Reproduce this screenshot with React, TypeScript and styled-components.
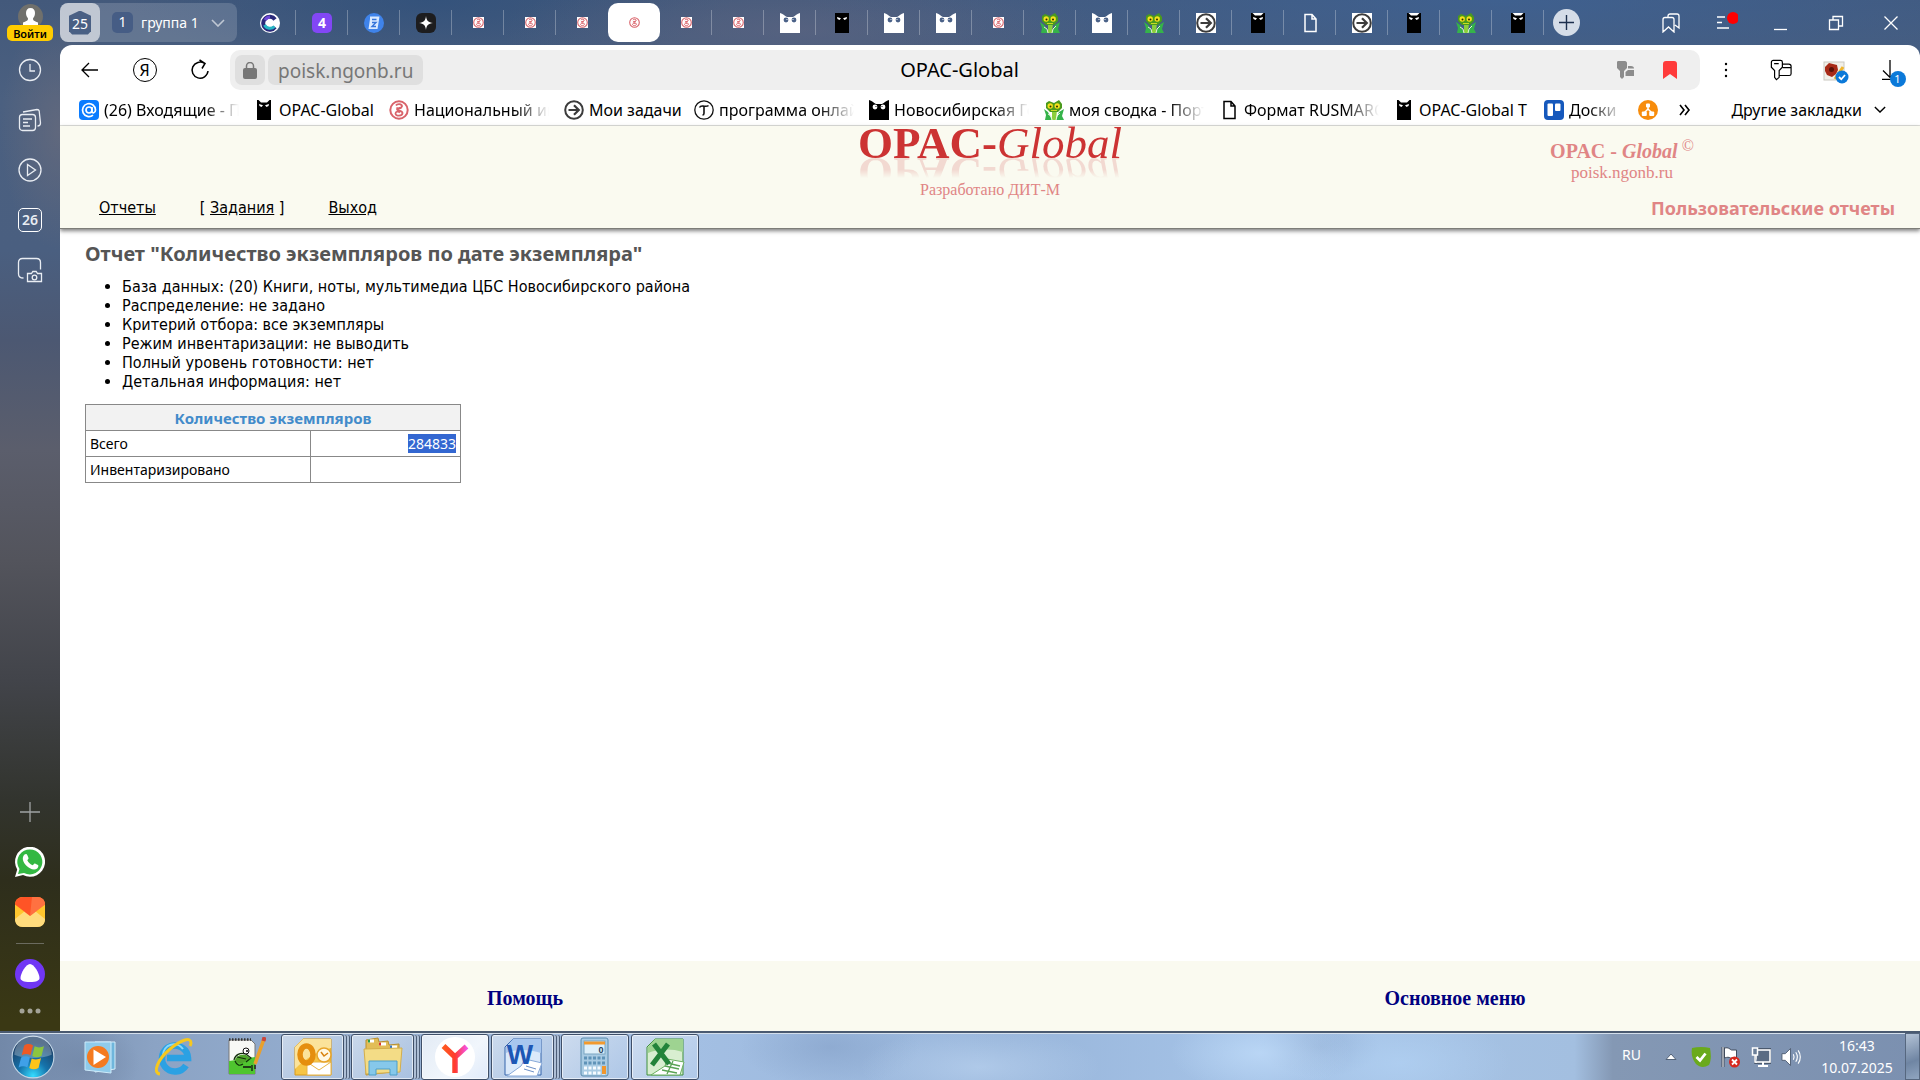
import React from 'react';
import styled, { createGlobalStyle, css } from 'styled-components';

const ui = `'Noto Sans', 'Open Sans', sans-serif`;
const serif = `'Liberation Serif', 'Times New Roman', serif`;

const GlobalStyle = createGlobalStyle`
  *, *::before, *::after { box-sizing: border-box; }
  body { margin: 0; font-family: ${ui}; color: #000; }
  button { font: inherit; color: inherit; border: 0; padding: 0; margin: 0; background: none; cursor: pointer; }
  a { color: inherit; }
  svg { display: block; flex: none; }
`;

/* ---------- window ---------- */

const Desktop = styled.div`
  min-height: 100vh;
  display: flex;
  flex-direction: column;
`;

const BrowserWindow = styled.div`
  flex: 1;
  display: grid;
  grid-template-columns: 60px minmax(0, 1fr);
  background:
    radial-gradient(ellipse 60px 120px at 60px 130px, rgba(106, 108, 124, 0.7), transparent),
    radial-gradient(ellipse 300px 60px at 800px 30px, rgba(96, 102, 130, 0.6), transparent),
    radial-gradient(ellipse 300px 70px at 430px 0, rgba(46, 80, 124, 0.7), transparent),
    radial-gradient(ellipse 700px 90px at 1500px 0, rgba(62, 98, 148, 0.8), transparent),
    linear-gradient(180deg, #43597b 0, #4b6080 100px, #4a5f80 250px, #4c5872 340px, #5b5e6c 450px, #53545c 560px, #42444a 680px, #32342e 800px, #2e2e1c 880px, #3a3814 1020px);
`;

const Rail = styled.aside`
  display: flex;
  flex-direction: column;
  align-items: center;
  padding: 4px 0 8px;
  color: #fff;
`;

const RailButton = styled.button`
  width: 40px;
  height: 50px;
  display: grid;
  place-items: center;
  color: #e9edf3;
`;

const Login = styled.button`
  width: 46px;
  height: 41px;
  display: flex;
  flex-direction: column;
  align-items: center;
`;

const LoginLabel = styled.span`
  width: 46px;
  height: 16px;
  margin-top: -4px;
  border-radius: 5px;
  background: #ffcc00;
  color: #000;
  font-size: 11px;
  line-height: 17px;
  font-weight: 600;
  text-align: center;
  z-index: 1;
`;

const DayBadge = styled.span`
  width: 24px;
  height: 24px;
  border: 1px solid #fff;
  border-radius: 5px;
  font-size: 14px;
  line-height: 22px;
  font-weight: 600;
  text-align: center;
`;

const RailSpace = styled.div`
  flex: 1;
`;

const RailDivider = styled.hr`
  width: 28px;
  height: 1px;
  margin: 6px 0 5px;
  border: 0;
  background: #6b6b5f;
`;

const MainColumn = styled.div`
  display: flex;
  flex-direction: column;
  min-width: 0;
`;

/* ---------- tab strip ---------- */

const TabStrip = styled.header`
  height: 45px;
  display: flex;
  align-items: center;
  color: #fff;
`;

const TabGroup = styled.div`
  display: flex;
  align-items: center;
  width: 177px;
  height: 39px;
  margin-right: 7px;
  border-radius: 8px;
  background: rgba(255, 255, 255, 0.16);
  font-size: 14px;
`;

const TabCounter = styled.button`
  width: 40px;
  height: 39px;
  display: grid;
  place-items: center;
  border-radius: 8px;
  background: rgba(255, 255, 255, 0.6);
`;

const CounterHouse = styled.span`
  width: 22px;
  height: 24px;
  padding-top: 2px;
  background: #4a6084;
  clip-path: polygon(50% 0, 100% 22%, 100% 86%, 86% 100%, 14% 100%, 0 86%, 0 22%);
  line-height: 22px;
  text-align: center;
`;

const GroupIndex = styled.span`
  width: 21px;
  height: 21px;
  margin: 0 8px 0 12px;
  border-radius: 5px;
  background: #465d85;
  line-height: 20px;
  text-align: center;
`;

const GroupName = styled.button`
  display: flex;
  align-items: center;
  gap: 12px;

  svg { opacity: 0.6; }
`;

const Tabs = styled.nav`
  display: flex;
`;

const Tab = styled.button<{ $active?: boolean; $divided?: boolean }>`
  width: 52px;
  height: 39px;
  display: grid;
  place-items: center;
  ${(p) => p.$divided && css`
    background: linear-gradient(rgba(255, 255, 255, 0.28), rgba(255, 255, 255, 0.28)) right center / 1px 25px no-repeat;
  `}
  ${(p) => p.$active && css`
    border-radius: 10px;
    background: #fff;
  `}
`;

const AddTab = styled.button`
  width: 27px;
  height: 27px;
  margin-left: 9px;
  display: grid;
  place-items: center;
  border-radius: 50%;
  background: #d5dde8;
  color: #1c2f4d;
`;

const WindowControls = styled.div`
  display: flex;
  margin-left: auto;
  margin-right: 2px;
`;

const WindowButton = styled.button`
  width: 55px;
  height: 39px;
  display: grid;
  place-items: center;
`;

/* ---------- toolbar ---------- */

const Card = styled.div`
  flex: 1;
  display: flex;
  flex-direction: column;
  border-radius: 12px 12px 0 0;
  background: #fff;
  overflow: hidden;
`;

const Toolbar = styled.div`
  display: flex;
  align-items: center;
  padding: 5px 2px 0;
`;

const ToolButton = styled.button`
  width: 55px;
  height: 40px;
  display: grid;
  place-items: center;
`;

const YandexMark = styled.span`
  width: 24px;
  height: 24px;
  border: 1px solid #000;
  border-radius: 50%;
  font-size: 16px;
  line-height: 22px;
  text-align: center;
`;

const AddressBar = styled.div`
  flex: 1;
  height: 40px;
  display: grid;
  grid-template-columns: 1fr auto 1fr;
  align-items: center;
  margin: 0 -2px 0 3px;
  padding: 0 8px 0 5px;
  border-radius: 10px;
  background: #efefef;
`;

const AddressStart = styled.div`
  display: flex;
  gap: 3px;
`;

const LockButton = styled.button`
  width: 30px;
  height: 30px;
  display: grid;
  place-items: center;
  border-radius: 7px;
  background: #dfdfdf;
`;

const Url = styled.button`
  height: 30px;
  padding: 0 10px;
  border-radius: 7px;
  background: #dfdfdf;
  color: #777;
  font-size: 19px;
  line-height: 32px;
`;

const PageTitle = styled.span`
  padding-right: 8px;
  font-size: 20px;
  line-height: 32px;
`;

const AddressEnd = styled.div`
  display: flex;
  justify-content: flex-end;
`;

const AddressButton = styled.button`
  width: 45px;
  height: 30px;
  display: grid;
  place-items: center;
`;

const Bookmarks = styled.nav`
  height: 36px;
  display: flex;
  align-items: center;
  gap: 15px;
  padding: 4px 34px 0 19px;
  border-bottom: 1px solid #dfe0dc;
  font-size: 16px;
  line-height: 24px;
`;

const Bookmark = styled.a<{ $width: number; $fade?: boolean }>`
  flex: none;
  width: ${(p) => p.$width}px;
  display: flex;
  align-items: center;
  gap: 5px;
  white-space: nowrap;
  text-decoration: none;
  ${(p) => p.$fade && css`
    mask-image: linear-gradient(90deg, #000 calc(100% - 34px), transparent 100%);
  `}
`;

const BookmarkIcon = styled.span`
  flex: none;
  width: 20px;
  display: grid;
  place-items: center;
`;

const OtherBookmarks = styled.button`
  display: flex;
  align-items: center;
  gap: 12px;
  margin-left: auto;
  white-space: nowrap;
`;

/* ---------- report page ---------- */

const PageHeader = styled.header`
  display: grid;
  grid-template-columns: repeat(3, minmax(0, 1fr));
  min-height: 103px;
  border-bottom: 1px solid #7d7d78;
  background: #fafaf0;
  box-shadow: 0 2px 4px rgba(0, 0, 0, 0.5);
  z-index: 1;
`;

const SiteNav = styled.nav`
  display: flex;
  align-items: flex-end;
  gap: 44px;
  padding: 0 0 9px 39px;
  font-family: 'DejaVu Sans Condensed', ${ui};
  font-size: 16px;
  line-height: 22px;
`;

const SiteLogo = styled.div`
  display: flex;
  flex-direction: column;
  align-items: center;
  font-family: ${serif};
`;

const LogoText = styled.div`
  color: #cc3333;
  font-size: 45px;
  line-height: 34px;
  -webkit-box-reflect: below -4px linear-gradient(transparent 35%, rgba(0, 0, 0, 0.16) 60%);
`;

const LogoCaption = styled.div`
  margin-top: 20px;
  color: #e08585;
  font-size: 16px;
  line-height: 20px;
`;

const SiteInfo = styled.div`
  display: flex;
  flex-direction: column;
  justify-content: space-between;
  padding: 13px 25px 8px;
  color: #e08585;
`;

const SiteName = styled.div`
  padding-left: 24px;
  text-align: center;
  font-family: ${serif};
  font-size: 17px;
  line-height: 19px;

  strong { font-size: 20px; line-height: 24px; }
  sup { font-size: 16px; line-height: 1px; }
`;

const SectionTitle = styled.div`
  align-self: flex-end;
  font-size: 18px;
  line-height: 24px;
  font-weight: 700;
`;

const Report = styled.main`
  flex: 1;
  padding: 12px 25px;
`;

const ReportTitle = styled.h1`
  margin: 0 0 10px;
  color: #555;
  font-size: 20px;
  line-height: 26px;
  font-weight: 700;
`;

const Params = styled.ul`
  margin: 0 0 13px;
  padding-left: 37px;
  font-family: 'DejaVu Sans Condensed', ${ui};
  font-size: 16px;
  line-height: 19px;
`;

const CountTable = styled.table`
  width: 376px;
  border-collapse: collapse;
  table-layout: fixed;
  font-size: 14px;
  line-height: 18px;

  th, td { height: 26px; padding: 4px 4px 3px; border: 1px solid #888; text-align: left; font-weight: 400; }
  thead th { background: #f2f2f2; color: #428bca; font-size: 15px; font-weight: 700; text-align: center; }
  td { text-align: right; }
`;

const Selected = styled.span`
  background: #3367d1;
  color: #fff;
`;

const PageFooter = styled.footer`
  display: grid;
  grid-template-columns: 1fr 1fr;
  place-items: center;
  height: 70px;
  padding-top: 4px;
  background: #fafaf0;
  color: #000080;
  font-family: ${serif};
  font-size: 20px;
  font-weight: 700;

  a { text-decoration: none; }
`;

/* ---------- taskbar ---------- */

const Taskbar = styled.footer`
  height: 49px;
  display: flex;
  align-items: stretch;
  border-top: 2px solid #4a5a70;
  box-shadow: inset 0 1px 0 #d3deeb;
  background:
    radial-gradient(ellipse 90px 40px at 1260px 20px, rgba(190, 218, 248, 0.8), transparent),
    radial-gradient(ellipse 110px 50px at 1400px 30px, rgba(178, 210, 244, 0.7), transparent),
    radial-gradient(ellipse 120px 40px at 980px 34px, rgba(190, 214, 242, 0.6), transparent),
    radial-gradient(ellipse 60px 30px at 1320px 14px, rgba(128, 156, 196, 0.5), transparent),
    radial-gradient(ellipse 90px 40px at 830px 14px, rgba(128, 156, 196, 0.5), transparent),
    radial-gradient(ellipse 60px 40px at 80px 30px, rgba(112, 134, 166, 0.7), transparent),
    linear-gradient(90deg, #7288a8 0, #8ba3c4 8%, #93acce 16%, #a3bfe3 36%, #98b5da 52%, #a6c4e8 66%, #a3bfe0 82%, #8498b4 84%, #7b90b0 100%);
`;

const Launchers = styled.div`
  display: flex;
  align-items: center;
`;

const Launcher = styled.button<{ $width?: number }>`
  width: ${(p) => p.$width ?? 70}px;
  height: 47px;
  display: grid;
  place-items: center;
`;

const RunningApp = styled.button<{ $stacked?: boolean; $current?: boolean }>`
  width: ${(p) => (p.$stacked ? 63 : 68)}px;
  height: 46px;
  margin-right: ${(p) => (p.$stacked ? 7 : 2)}px;
  display: grid;
  place-items: center;
  border: 1px solid #3f4f68;
  border-radius: 3px;
  background: ${(p) => (p.$current
    ? 'linear-gradient(135deg, #e3ebf5, #f1f6fc 60%, #dfeafa)'
    : 'linear-gradient(135deg, rgba(230, 238, 248, 0.65), rgba(190, 212, 240, 0.45))')};
  box-shadow: inset 0 0 0 1px rgba(255, 255, 255, 0.6)${(p) => (p.$stacked ? ', 3px 0 0 -1px #aebfd6, 4px 0 0 -1px #4d5e78, 6px 0 0 -1px #aebfd6, 7px 0 0 -1px #4d5e78' : '')};
`;

const Tray = styled.div`
  display: flex;
  align-items: center;
  margin-left: auto;
  color: #fff;
  font-size: 14px;
`;

const TrayIcons = styled.div`
  display: flex;
  align-items: center;
  gap: 10px;
`;

const TrayLanguage = styled.button`
  margin-right: 10px;
  padding-bottom: 4px;
`;

const Clock = styled.time`
  width: 104px;
  padding-left: 8px;
  font-size: 14px;
  line-height: 22px;
  text-align: center;
`;

const ShowDesktop = styled.button`
  align-self: stretch;
  width: 15px;
  border: 1px solid #56677f;
  background: linear-gradient(160deg, #b4c3d6, #6f85a3 60%, #90a5c0);
`;

/* ---------- icons ---------- */

type IconProps = { children: React.ReactNode; size?: number; box?: number };

const Line = ({ children, size = 24, box = 24 }: IconProps) => (
  <svg width={size} height={size} viewBox={`0 0 ${box} ${box}`} fill="none" stroke="currentColor" strokeWidth="1.3" aria-hidden="true">
    {children}
  </svg>
);

const LibrarySeal = ({ size = 10, plain = false }: { size?: number; plain?: boolean }) => (
  <svg width={size} height={size} viewBox="0 0 20 20" fill="none" aria-hidden="true">
    {!plain && <rect width="20" height="20" fill="#fff" />}
    <circle cx="10" cy="10" r="8.700" stroke="#d9636a" strokeWidth="2" fill="#fff" />
    <path d="M7 5.500c1-2 6-2 6 .8 0 2.200-5 1.200-5 3.200 0 1.500 5.500.5 5.500 3.500 0 3.500-7 3.500-7 .5 0-2 3-2.500 4.500-1M7.500 7.500c1 1.500 4 1.200 5 0" stroke="#d9636a" strokeWidth="1.800" />
  </svg>
);

const WideOwl = ({ fill, eye }: { fill: string; eye: string }) => (
  <svg width="20" height="20" viewBox="0 0 20 20" aria-hidden="true">
    <path d="M0 0c3 1 4.500 2.500 7 4h6c2.500-1.500 4-3 7-4v20H0z" fill={fill} />
    <circle cx="6" cy="7" r="2.400" fill={eye} />
    <circle cx="14" cy="7" r="2.400" fill={eye} />
    <circle cx="7" cy="6.500" r=".6" fill={fill} />
    <circle cx="13" cy="6.500" r=".6" fill={fill} />
  </svg>
);

const NarrowOwl = ({ light = false }: { light?: boolean }) => (
  <svg width="14" height="20" viewBox="0 0 14 20" aria-hidden="true">
    <path d="M0 0h14v20H0z" fill="#000" />
    {light && <path d="M1.500 0h11L10 2.500H4z" fill="#fff" />}
    <path d="M2 4l4 1.200L4.500 7 2.500 6zM12 4L8 5.200 9.500 7l2-1z" fill="#fff" />
  </svg>
);

const Frog = () => (
  <svg width="20" height="20" viewBox="0 0 20 20" aria-hidden="true">
    <path d="M8 10h5l-1 10H8z" fill="#8ccf3c" />
    <path d="M0 9l4 3 4 8H1l1-5zM20 9l-5 3-3 8h8l-2-4z" fill="#35b34a" />
    <path d="M2 3l3-2 5 2 5-3 3 4v4l-4 4H6L2 8z" fill="#4a9a1d" />
    <circle cx="6.200" cy="6" r="2.700" fill="#f4e11c" />
    <circle cx="13.200" cy="6" r="2.700" fill="#f4e11c" />
    <circle cx="6.500" cy="6.500" r="1" fill="#2b2b00" />
    <circle cx="13" cy="6.500" r="1" fill="#2b2b00" />
    <path d="M7 10.500h6" stroke="#c9dc24" />
    <path d="M4 14l3 2 1 4M16 13l-3 3-1 4" stroke="#e6f7d8" fill="none" />
  </svg>
);

const RoundArrow = ({ plain = false }: { plain?: boolean }) => (
  <svg width="20" height="20" viewBox="0 0 20 20" fill="none" stroke="#3c3c3c" strokeWidth="2.200" aria-hidden="true">
    {!plain && <rect width="20" height="20" fill="#fff" stroke="none" />}
    <circle cx="10" cy="10" r="8.800" strokeWidth="2" />
    <path d="M4.500 10h10M10 5.200l4.800 4.800-4.800 4.800" />
  </svg>
);

const PageIcon = () => (
  <svg width="13" height="20" viewBox="0 0 13 20" fill="none" stroke="currentColor" strokeWidth="1.500" aria-hidden="true">
    <path d="M1 1.500h7l4 4.500v12.500H1zM8 1.500V6h4" />
  </svg>
);

const CopilotIcon = () => (
  <svg width="20" height="20" viewBox="0 0 20 20" fill="none" aria-hidden="true">
    <circle cx="10" cy="10" r="10" fill="#fff" />
    <path d="M15 6.500A6.500 6.500 0 1 0 15 14" stroke="#2a2a7a" strokeWidth="4" />
    <path d="M14.500 13.500A6.300 6.300 0 0 1 4.500 12" stroke="#27b5c4" strokeWidth="3" />
    <path d="M5 7a6.300 6.300 0 0 1 5-3" stroke="#6f49d8" strokeWidth="3" />
  </svg>
);

const FourIcon = styled.span`
  width: 20px;
  height: 20px;
  border-radius: 5px;
  background: #8247f5;
  color: #fff;
  font-size: 14px;
  line-height: 20px;
  font-weight: 700;
`;

const EditorIcon = () => (
  <svg width="20" height="20" viewBox="0 0 20 20" aria-hidden="true">
    <circle cx="10" cy="10" r="10" fill="#3f83ea" />
    <path d="M6 3.500h9.500l-2 12.500H4.500L6 6z" fill="#d9e9ff" />
    <path d="M8 6.500h4.500M8 9.500h4L8 13.500h4" stroke="#3474da" strokeWidth="1.400" fill="none" />
  </svg>
);

const SparkIcon = () => (
  <svg width="20" height="20" viewBox="0 0 20 20" aria-hidden="true">
    <rect width="20" height="20" rx="6" fill="#1d1d1f" />
    <path d="M10 3c.6 4.800 2.200 6.400 7 7-4.800.6-6.400 2.200-7 7-.6-4.800-2.200-6.400-7-7 4.800-.6 6.400-2.200 7-7z" fill="#fff" />
  </svg>
);

const MailIcon = () => (
  <svg width="20" height="20" viewBox="0 0 20 20" fill="none" stroke="#fff" strokeWidth="1.700" aria-hidden="true">
    <rect width="20" height="20" rx="4" fill="#0a7cff" stroke="none" />
    <circle cx="10" cy="10" r="3" />
    <path d="M13 7v4.500c0 2 3.500 1.800 3.500-1.500A6.500 6.500 0 1 0 14 15.200" />
  </svg>
);

const TIcon = () => (
  <svg width="20" height="20" viewBox="0 0 20 20" fill="none" stroke="#111" strokeWidth="1.300" aria-hidden="true">
    <circle cx="10" cy="10" r="9.200" />
    <path d="M5.500 7.500C6.500 5.500 8 6 10 6.200s3.500.3 4.500-.7M10 6.200v7c0 1.200-.5 1.800-1.500 1.800" strokeWidth="1.600" />
  </svg>
);

const BoardIcon = () => (
  <svg width="20" height="20" viewBox="0 0 20 20" aria-hidden="true">
    <rect width="20" height="20" rx="4" fill="#1558bc" />
    <rect x="3.500" y="3.500" width="5.500" height="12.500" rx="1" fill="#fff" />
    <rect x="11" y="3.500" width="5.500" height="7.500" rx="1" fill="#fff" />
  </svg>
);

const NetIcon = () => (
  <svg width="20" height="20" viewBox="0 0 20 20" aria-hidden="true">
    <circle cx="10" cy="10" r="10" fill="#f78c0c" />
    <path d="M10 6v4M10 9l-4 4M10 9l4 4" stroke="#fff" strokeWidth="1.500" />
    <rect x="8" y="3.500" width="4" height="4" rx="1" fill="#fff" />
    <rect x="3.800" y="11.500" width="5" height="4.500" rx="1" fill="#fff" />
    <rect x="11.200" y="11.500" width="5" height="4.500" rx="1" fill="#fff" />
  </svg>
);

const Chevron = ({ w = 14 }: { w?: number }) => (
  <svg width={w} height={w / 2 + 1} viewBox="0 0 14 8" fill="none" stroke="currentColor" strokeWidth="1.600" aria-hidden="true">
    <path d="M1 1l6 6 6-6" />
  </svg>
);

const Big = ({ children, size = 40 }: IconProps) => (
  <svg width={size} height={size} viewBox="0 0 40 40" aria-hidden="true">{children}</svg>
);

const StartIcon = () => (
  <Big size={44}>
    <defs>
      <radialGradient id="orb" cx="50%" cy="95%" r="80%">
        <stop offset="0" stopColor="#35dcff" />
        <stop offset=".45" stopColor="#1673ab" />
        <stop offset="1" stopColor="#1c3f66" />
      </radialGradient>
    </defs>
    <circle cx="20" cy="20" r="19" fill="url(#orb)" stroke="#c3d6e6" />
    <path d="M3 18a17 17 0 0 1 34 0c-10 4-24 4-34 0z" fill="#fff" opacity=".28" />
    <path d="M12 9.500c3-1.800 5.500-1.500 8 0l-2.300 9c-2.500-1.500-5-1.600-8 0z" fill="#ee5a24" />
    <path d="M21.500 10.300c3 1.500 5.500 1.300 8.500-.3l-2.300 9c-3 1.600-5.500 1.600-8.400 0z" fill="#8cc63f" />
    <path d="M9.200 20.500c3-1.600 5.500-1.400 8 0l-2.300 9c-2.500-1.500-5-1.600-8 0z" fill="#3fa0e8" />
    <path d="M18.800 21.300c3 1.500 5.500 1.300 8.500-.3l-2.300 9c-3 1.600-5.500 1.600-8.400 0z" fill="#fcc419" />
  </Big>
);

const PlayerIcon = () => (
  <Big>
    <path d="M14 5l20 0v27l-20 3z" fill="#6fb6dc" stroke="#d6eefa" />
    <path d="M4 5h26v31L4 33z" fill="#8fcbea" stroke="#cdeafa" />
    <circle cx="17" cy="20" r="11" fill="#f47a20" />
    <path d="M12.500 12.500L25 20l-12.500 8z" fill="#fff" />
  </Big>
);

const IeIcon = () => (
  <Big>
    <path d="M32 28.500A13 13 0 1 1 34 21H13" fill="none" stroke="#2ba1e3" strokeWidth="6.500" />
    <path d="M29 12A11 11 0 0 0 9 18" fill="none" stroke="#8bd8fa" strokeWidth="2" />
    <path d="M6 37C-2 36 4 22 16 12S37 0 37 6c0 1-.4 2-1 3" fill="none" stroke="#f7c81e" strokeWidth="3" />
  </Big>
);

const NotepadIcon = () => (
  <Big>
    <path d="M3 3h22l4 4v30H3z" fill="#f8f9f6" stroke="#777" />
    <path d="M3 24l26-4v17H3z" fill="#4fc52f" />
    <path d="M3 2.500h22" stroke="#333" strokeWidth="2.500" strokeDasharray="1.500 1.500" />
    <path d="M9 23c1-4 6-6 11-5l4 3-4 3c-4 3-9 3-11-1z" fill="#4fa52b" />
    <path d="M8 23c1-5 6-8 12-6l5 4-5 4M9 24c2 5 5 5 8 3M11 20l9 2" fill="none" stroke="#12300a" strokeWidth="1.200" />
    <circle cx="20" cy="14" r="3" fill="#fff" stroke="#111" />
    <circle cx="21" cy="14" r="1" />
    <path d="M17 30h8m1-2v6m3-6v4" stroke="#111" strokeWidth="1.300" />
    <path d="M38 2l-9 25" stroke="#e9a02c" strokeWidth="3.500" />
    <path d="M38.500 0l-1 4" stroke="#c9453b" strokeWidth="4" />
  </Big>
);

const IconLetter = styled.text`
  font-family: 'Liberation Sans', sans-serif;
  font-weight: 700;
  text-anchor: middle;
`;

const OutlookIcon = () => (
  <Big>
    <path d="M2 10l8-8h28v36H2z" fill="#f6c546" stroke="#d99a1a" />
    <path d="M2 10l8-8h28v9C24 14 12 22 2 32z" fill="#fbe39a" />
    <path d="M14 25h24v13H14z" fill="#fff" stroke="#e8b446" />
    <path d="M14 25l12 8 12-8" fill="none" stroke="#e8b446" />
    <ellipse cx="13.500" cy="17.500" rx="6.500" ry="8.500" fill="none" stroke="#e58e0e" strokeWidth="5.500" />
    <circle cx="31" cy="18" r="7" fill="#fff8e4" stroke="#e8a42a" strokeWidth="1.500" />
    <path d="M28 15l3 4 4-3" fill="none" stroke="#d8820f" strokeWidth="1.500" />
  </Big>
);

const FolderIcon = () => (
  <Big>
    <path d="M3 3l12-2 1 4 9-1 1 4 10-1v27l-33 4z" fill="#e2bd57" stroke="#b98f2e" />
    <path d="M5 4h6M16 7h7M27 10h7" stroke="#fff" strokeWidth="3" />
    <path d="M5 4h2" stroke="#2c9e46" strokeWidth="3" />
    <path d="M16 7h2" stroke="#d8392b" strokeWidth="3" />
    <path d="M27 10h2" stroke="#3579c8" strokeWidth="3" />
    <path d="M1 12l38-1-2 24-34 2z" fill="#f3dc86" stroke="#d4ae4b" />
    <path d="M6 38V24h28v14h-7v-6H13v6z" fill="#86c8ea" stroke="#4d9fc9" />
  </Big>
);

const YandexIcon = () => (
  <Big>
    <defs>
      <linearGradient id="yb" x1="0" x2="1">
        <stop offset="0" stopColor="#ff5a1f" />
        <stop offset=".5" stopColor="#ff3b30" />
        <stop offset="1" stopColor="#f552e0" />
      </linearGradient>
    </defs>
    <circle cx="20" cy="20" r="20" fill="#fff" />
    <path d="M8.500 9L20 20v16V20L31.500 9.500" fill="none" stroke="url(#yb)" strokeWidth="5.500" />
  </Big>
);

const WordIcon = () => (
  <Big>
    <path d="M2 10l8-8h28v36H2z" fill="#dbe9fa" stroke="#3465ab" />
    <path d="M10 2h28v14C26 12 12 12 3 16v-6z" fill="#a8c7ef" />
    <path d="M22 22l17 4-5 13H4l14-10z" fill="#fff" stroke="#88a9d8" />
    <path d="M23 29l10 3M21 32l10 3" stroke="#6c8fc6" />
    <IconLetter x="17" y="27" fontSize="28" fill="#1d57b5">W</IconLetter>
  </Big>
);

const CalcIcon = () => (
  <Big>
    <rect x="6" y="1" width="27" height="38" rx="2" fill="#a9cbe3" stroke="#5b8cae" />
    <rect x="9" y="4" width="21" height="13" fill="#dff0fa" stroke="#7ba6c2" />
    <path d="M9 6h21" stroke="#f29a2e" strokeWidth="3" />
    <IconLetter x="26" y="16" fontSize="9" fill="#26415c">0</IconLetter>
    {[21, 26, 31, 36].map((y) => (
      <path key={y} d={`M9 ${y}h21`} stroke={y > 30 ? '#f6fbff' : '#5f93b8'} strokeWidth="3" strokeDasharray="3 1.500" />
    ))}
    <rect x="27" y="29" width="4" height="8" fill="#f0962e" />
  </Big>
);

const ExcelIcon = () => (
  <Big>
    <path d="M2 10l8-8h28v36H2z" fill="#d8eed0" stroke="#3f8f3c" />
    <path d="M10 2h28v13C26 11 12 12 3 16v-6z" fill="#9ed391" />
    <path d="M22 22l17 3-4 13H6l14-9z" fill="#fff" stroke="#6bb060" />
    <path d="M22 26l13 3M20 29l14 3M17 33l15 3M28 24l-6 13" stroke="#5aa355" strokeWidth="1.300" />
    <path d="M9 7l15 20M23 7L7 28" stroke="#23833a" strokeWidth="5" />
  </Big>
);

/* ---------- data ---------- */

const tabs: { name: string; icon: React.ReactNode }[] = [
  { name: 'Copilot', icon: <CopilotIcon /> },
  { name: '4', icon: <FourIcon>4</FourIcon> },
  { name: 'Редактор', icon: <EditorIcon /> },
  { name: 'Spark', icon: <SparkIcon /> },
  { name: 'НЭБ', icon: <LibrarySeal size={11} /> },
  { name: 'НЭБ', icon: <LibrarySeal size={11} /> },
  { name: 'НЭБ', icon: <LibrarySeal size={11} /> },
  { name: 'OPAC-Global', icon: <LibrarySeal size={11} /> },
  { name: 'НЭБ', icon: <LibrarySeal size={11} /> },
  { name: 'НЭБ', icon: <LibrarySeal size={11} /> },
  { name: 'Библиотека', icon: <WideOwl fill="#fff" eye="#4b6288" /> },
  { name: 'OPAC', icon: <NarrowOwl /> },
  { name: 'Библиотека', icon: <WideOwl fill="#fff" eye="#4b6288" /> },
  { name: 'Библиотека', icon: <WideOwl fill="#fff" eye="#4b6288" /> },
  { name: 'НЭБ', icon: <LibrarySeal size={11} /> },
  { name: 'Сводка', icon: <Frog /> },
  { name: 'Библиотека', icon: <WideOwl fill="#fff" eye="#4b6288" /> },
  { name: 'Сводка', icon: <Frog /> },
  { name: 'Задачи', icon: <RoundArrow /> },
  { name: 'OPAC', icon: <NarrowOwl light /> },
  { name: 'Документ', icon: <PageIcon /> },
  { name: 'Задачи', icon: <RoundArrow /> },
  { name: 'OPAC', icon: <NarrowOwl light /> },
  { name: 'Сводка', icon: <Frog /> },
  { name: 'OPAC', icon: <NarrowOwl light /> },
];
const activeTab = 7;

const bookmarks: { text: string; icon: React.ReactNode; width: number; fade?: boolean }[] = [
  { text: '(26) Входящие - П', icon: <MailIcon />, width: 160, fade: true },
  { text: 'OPAC-Global', icon: <NarrowOwl light />, width: 120 },
  { text: 'Национальный ин', icon: <LibrarySeal size={20} plain />, width: 160, fade: true },
  { text: 'Мои задачи', icon: <RoundArrow plain />, width: 115 },
  { text: 'программа онлай', icon: <TIcon />, width: 160, fade: true },
  { text: 'Новосибирская Го', icon: <WideOwl fill="#000" eye="#fff" />, width: 160, fade: true },
  { text: 'моя сводка - Порт', icon: <Frog />, width: 160, fade: true },
  { text: 'Формат RUSMARC', icon: <PageIcon />, width: 160, fade: true },
  { text: 'OPAC-Global T', icon: <NarrowOwl light />, width: 135 },
  { text: 'Доски', icon: <BoardIcon />, width: 79, fade: true },
  { text: '', icon: <NetIcon />, width: 20 },
];

const params = [
  'База данных: (20) Книги, ноты, мультимедиа ЦБС Новосибирского района',
  'Распределение: не задано',
  'Критерий отбора: все экземпляры',
  'Режим инвентаризации: не выводить',
  'Полный уровень готовности: нет',
  'Детальная информация: нет',
];

/* ---------- parts ---------- */

const SideRail = () => (
  <Rail>
    <Login>
      <svg width="25" height="25" viewBox="0 0 25 25" aria-hidden="true">
        <circle cx="12.500" cy="12.500" r="12.500" fill="#70706c" />
        <path d="M12.500 4c3 0 4.500 2 4.500 5 0 2.500-1 4-2 5.500 0 2 1 2.500 5 4V25H5v-6.500c4-1.500 5-2 5-4C9 13 8 11.500 8 9c0-3 1.500-5 4.500-5z" fill="#fff" />
      </svg>
      <LoginLabel>Войти</LoginLabel>
    </Login>
    <RailButton aria-label="История">
      <Line><circle cx="12" cy="12" r="10.500" /><path d="M12 6v7h5" /></Line>
    </RailButton>
    <RailButton aria-label="Коллекции">
      <Line>
        <rect x="1.500" y="6.500" width="16" height="16" rx="3" />
        <path d="M5 4l14-2.500c1 0 2 .5 2.200 1.500L22.500 15c0 2-1.500 3-3 3M5 11h9M5 14.500h5M5 18h7" />
      </Line>
    </RailButton>
    <RailButton aria-label="Видео">
      <Line><circle cx="12" cy="12" r="11" /><path d="M9.500 6.500v11l8-5.500z" /></Line>
    </RailButton>
    <RailButton aria-label="Календарь"><DayBadge>26</DayBadge></RailButton>
    <RailButton aria-label="Скриншот">
      <Line size={26} box={26}>
        <path d="M6.500 21C3 21 1.500 19.500 1.500 17V5.500c0-2.500 1.500-4 4-4h14c2.500 0 4 1.500 4 4v7" />
        <path d="M10.500 16.500h4l1.300-2h3.400l1.300 2h4v8h-14z" />
        <circle cx="17.500" cy="20.500" r="2.300" />
      </Line>
    </RailButton>
    <RailSpace />
    <RailButton aria-label="Добавить">
      <Line size={20} box={20}><path d="M10 0v20M0 10h20" opacity=".6" /></Line>
    </RailButton>
    <RailButton aria-label="WhatsApp">
      <svg width="30" height="30" viewBox="0 0 30 30" aria-hidden="true">
        <path d="M0 30l2.200-7.500A15 15 0 1 1 8 28z" fill="#fff" />
        <path d="M3 27l1.500-5A12.500 12.500 0 1 1 9 26z" fill="#33b843" />
        <path d="M9.500 7.500c1.500-1 2.500-.5 3 1l1 2.500c.2 1-.8 1.500-1.200 2.200 1.200 2.500 3 4 5.500 5 .8-.7 1.200-2 2.200-1.700l3 1.500c.7.500.4 2.500-.8 3.500-3 2.500-8 .2-11-3s-5-7.500-1.700-11z" fill="#fff" />
      </svg>
    </RailButton>
    <RailButton aria-label="Почта">
      <svg width="30" height="30" viewBox="0 0 30 30" aria-hidden="true">
        <rect width="30" height="30" rx="8" fill="#ffc62e" />
        <path d="M0 22L15 10l15 12c0 5-3 8-8 8H8c-5 0-8-3-8-8z" fill="#ffdc7d" />
        <path d="M0 7.500C0 3 3 0 8 0h14c5 0 8 3 8 7.500L15 19z" fill="#ff5426" />
        <path d="M15 19L30 7.500C30 3 27 0 22 0h-5z" fill="#ff8653" opacity=".6" />
      </svg>
    </RailButton>
    <RailDivider />
    <RailButton aria-label="Алиса">
      <svg width="30" height="30" viewBox="0 0 30 30" aria-hidden="true">
        <circle cx="15" cy="15" r="15" fill="#7036f5" />
        <path d="M15 5c4 0 9.500 9.500 9.500 14 0 2.500-3 4-9.500 4s-9.500-1.500-9.500-4C5.500 14.500 11 5 15 5z" fill="#fff" />
      </svg>
    </RailButton>
    <button aria-label="Ещё">
      <svg width="22" height="24" viewBox="0 0 22 24" fill="#a3a398" aria-hidden="true">
        <circle cx="3" cy="12" r="2.500" /><circle cx="11" cy="12" r="2.500" /><circle cx="19" cy="12" r="2.500" />
      </svg>
    </button>
  </Rail>
);

const TopTabs = () => (
  <TabStrip>
    <TabGroup>
      <TabCounter aria-label="Все вкладки"><CounterHouse>25</CounterHouse></TabCounter>
      <GroupIndex>1</GroupIndex>
      <GroupName>группа 1 <Chevron /></GroupName>
    </TabGroup>
    <Tabs>
      {tabs.map((tab, i) => (
        <Tab key={i} aria-label={tab.name} $active={i === activeTab} $divided={i !== activeTab && i !== activeTab - 1}>
          {tab.icon}
        </Tab>
      ))}
    </Tabs>
    <AddTab aria-label="Новая вкладка"><Line size={15} box={14}><path d="M7 0v14M0 7h14" /></Line></AddTab>
    <WindowControls>
      <WindowButton aria-label="Закладки">
        <Line size={20} box={20}><path d="M2 6.500C2 5 3 4.500 4 4.500h7c1.500 0 2 1 2 2V19l-5.500-5L2 19zM7 4.500V3c0-1.500 1-2 2-2h7c1.500 0 2 1 2 2v12l-4-3" /></Line>
      </WindowButton>
      <WindowButton aria-label="Меню">
        <Line size={24} box={24}><path d="M3 6h8M3 11.500h5M3 17h12" /><circle cx="19" cy="7" r="6" fill="#f00" stroke="none" /></Line>
      </WindowButton>
      <WindowButton aria-label="Свернуть"><Line size={16} box={16}><path d="M1 14.500h13" /></Line></WindowButton>
      <WindowButton aria-label="Окно"><Line size={16} box={16}><path d="M1.500 5h9v9.500h-9zM5 5V1.500h9.500V11h-4" /></Line></WindowButton>
      <WindowButton aria-label="Закрыть"><Line size={16} box={16}><path d="M1.500 1.500l13 13M14.500 1.500l-13 13" /></Line></WindowButton>
    </WindowControls>
  </TabStrip>
);

const Downloads = styled.span`
  position: relative;
`;

const DownloadCount = styled.span`
  position: absolute;
  left: 9px;
  top: 11px;
  width: 16px;
  height: 16px;
  border-radius: 50%;
  background: #0b79d9;
  color: #fff;
  font-size: 11px;
  line-height: 16px;
  text-align: center;
`;

const AddressRow = () => (
  <Toolbar>
    <ToolButton aria-label="Назад"><Line size={20} box={20}><path d="M18 10H2M9 3l-7 7 7 7" /></Line></ToolButton>
    <ToolButton aria-label="Яндекс"><YandexMark>Я</YandexMark></ToolButton>
    <ToolButton aria-label="Обновить"><Line size={22} box={22}><path d="M15.500 4.500A8 8 0 1 0 19 12M10.500 1l5.500 3.500-3 5" strokeWidth="1.500" /></Line></ToolButton>
    <AddressBar>
      <AddressStart>
        <LockButton aria-label="Защищено">
          <svg width="14" height="17" viewBox="0 0 14 17" aria-hidden="true">
            <rect y="6" width="14" height="11" rx="2" fill="#777" />
            <path d="M3.500 7V4a3.500 3.500 0 0 1 7 0v3" fill="none" stroke="#777" strokeWidth="1.500" />
          </svg>
        </LockButton>
        <Url>poisk.ngonb.ru</Url>
      </AddressStart>
      <PageTitle>OPAC-Global</PageTitle>
      <AddressEnd>
        <AddressButton aria-label="Пароли">
          <svg width="18" height="18" viewBox="0 0 18 18" fill="#8c8c8c" aria-hidden="true">
            <path d="M2 0h7c1 0 2 1 2 2v5L8 10v6l-2 2-2-2v-6L1 7V2c0-1 0-2 1-2zM12 5h3c2 0 3 1 3 2.500H12zM12 9h6v6H9.500v-4z" />
          </svg>
        </AddressButton>
        <AddressButton aria-label="Добавить в закладки">
          <svg width="14" height="18" viewBox="0 0 14 18" aria-hidden="true"><path d="M3 0h8c2 0 3 1 3 3v15l-7-5-7 5V3c0-2 1-3 3-3z" fill="#ff3b3b" /></svg>
        </AddressButton>
      </AddressEnd>
    </AddressBar>
    <ToolButton aria-label="Ещё">
      <svg width="4" height="16" viewBox="0 0 4 16" aria-hidden="true"><circle cx="2" cy="2" r="1.200" /><circle cx="2" cy="8" r="1.200" /><circle cx="2" cy="14" r="1.200" /></svg>
    </ToolButton>
    <ToolButton aria-label="Ключи">
      <Line size={22}><path d="M3.500 1.500h8c1 0 2 1 2 2V9L10 12.500v7.500L7 22.500 5 20v-7.500L1.500 9V3.500c0-1 1-2 2-2zM4.500 5h5M14 5.500h6.500c1.500 0 2.500 1 2.500 2.500v8c0 1-1 2-2 2H10M14 9.500h9" /></Line>
    </ToolButton>
    <ToolButton aria-label="Расширение">
      <svg width="26" height="28" viewBox="0 0 26 28" aria-hidden="true">
        <rect x="1" y="6" width="20" height="18" fill="#f1efe8" stroke="#c9c7c0" />
        <path d="M2 11l4-4 4 1 4 1 1 5-2 4-4 3-5-2-2-4z" fill="#a82a17" />
        <circle cx="8.500" cy="13.500" r="2.500" fill="#5b1008" />
        <path d="M12 23l8-12" stroke="#f0b429" strokeWidth="3" />
        <circle cx="19" cy="21" r="6.500" fill="#0b79d9" />
        <path d="M16 21l2.300 2.300 3.700-4.300" fill="none" stroke="#fff" strokeWidth="1.800" />
      </svg>
    </ToolButton>
    <ToolButton aria-label="Загрузки">
      <Downloads>
        <Line size={20} box={20}><path d="M9 0v17M2 10.500L9 17.500l5-4M1 19.400h10" /></Line>
        <DownloadCount>1</DownloadCount>
      </Downloads>
    </ToolButton>
  </Toolbar>
);

const BookmarkRow = () => (
  <Bookmarks>
    {bookmarks.map((b, i) => (
      <Bookmark key={i} href="#" aria-label={b.text || 'Сеть'} $width={b.width} $fade={b.fade}>
        <BookmarkIcon>{b.icon}</BookmarkIcon>
        {b.text}
      </Bookmark>
    ))}
    <button aria-label="Другие">
      <Line size={20} box={20}><path d="M7 5l4 5-4 5M12 5l4 5-4 5" strokeWidth="1.600" /></Line>
    </button>
    <OtherBookmarks>Другие закладки <Chevron w={12} /></OtherBookmarks>
  </Bookmarks>
);

const ReportPage = () => (
  <>
    <PageHeader>
      <SiteNav>
        <a href="#">Отчеты</a>
        <span>[ <a href="#">Задания</a> ]</span>
        <a href="#">Выход</a>
      </SiteNav>
      <SiteLogo>
        <LogoText><b>OPAC-</b><i>Global</i></LogoText>
        <LogoCaption>Разработано ДИТ-М</LogoCaption>
      </SiteLogo>
      <SiteInfo>
        <SiteName>
          <strong>OPAC - <i>Global</i></strong> <sup>©</sup><br />poisk.ngonb.ru
        </SiteName>
        <SectionTitle>Пользовательские отчеты</SectionTitle>
      </SiteInfo>
    </PageHeader>
    <Report>
      <ReportTitle>Отчет "Количество экземпляров по дате экземпляра"</ReportTitle>
      <Params>{params.map((p) => <li key={p}>{p}</li>)}</Params>
      <CountTable>
        <colgroup><col width="60%" /><col width="40%" /></colgroup>
        <thead><tr><th colSpan={2}>Количество экземпляров</th></tr></thead>
        <tbody>
          <tr><th scope="row">Всего</th><td><Selected>284833</Selected></td></tr>
          <tr><th scope="row">Инвентаризировано</th><td /></tr>
        </tbody>
      </CountTable>
    </Report>
    <PageFooter>
      <a href="#">Помощь</a>
      <a href="#">Основное меню</a>
    </PageFooter>
  </>
);

const SystemBar = () => (
  <Taskbar>
    <Launchers>
      <Launcher $width={66} aria-label="Пуск"><StartIcon /></Launcher>
      <Launcher aria-label="Проигрыватель"><PlayerIcon /></Launcher>
      <Launcher $width={75} aria-label="Internet Explorer"><IeIcon /></Launcher>
      <Launcher aria-label="Notepad++"><NotepadIcon /></Launcher>
      <RunningApp $stacked aria-label="Outlook"><OutlookIcon /></RunningApp>
      <RunningApp $stacked aria-label="Проводник"><FolderIcon /></RunningApp>
      <RunningApp $current aria-label="Яндекс Браузер"><YandexIcon /></RunningApp>
      <RunningApp $stacked aria-label="Word"><WordIcon /></RunningApp>
      <RunningApp aria-label="Калькулятор"><CalcIcon /></RunningApp>
      <RunningApp aria-label="Excel"><ExcelIcon /></RunningApp>
    </Launchers>
    <Tray>
      <TrayIcons>
        <TrayLanguage>RU</TrayLanguage>
        <svg width="20" height="8" viewBox="0 0 20 8" aria-hidden="true"><path d="M5 6.500L10 1l5 5.500z" fill="#fff" stroke="#526277" /></svg>
        <svg width="20" height="22" viewBox="0 0 20 22" aria-hidden="true">
          <path d="M1 2c6-1.500 12-1.500 18 0 1 6 1.500 12-1 17-5 3-9 2.500-13-1C1 13 0 8 1 2z" fill="#6aaa1c" />
          <path d="M5.500 11l3.500 3.500 5.500-7" fill="none" stroke="#fff" strokeWidth="2.800" />
        </svg>
        <svg width="20" height="22" viewBox="0 0 20 22" aria-hidden="true">
          <path d="M2 1v20" stroke="#404b5c" strokeWidth="3" /><path d="M2 1v20" stroke="#fff" />
          <path d="M3.500 2c4-1 5 1 7 2h5v8h-6c-2-1-3-1-6 0z" fill="#fff" stroke="#404b5c" />
          <circle cx="13.500" cy="16" r="5.500" fill="#d7281e" /><path d="M11 13.500l5 5m0-5l-5 5" stroke="#fff" strokeWidth="1.800" />
        </svg>
        <svg width="20" height="22" viewBox="0 0 20 22" aria-hidden="true">
          <rect x="5" y="4" width="14" height="12" fill="#5b6c84" stroke="#3a4658" strokeWidth="3.500" />
          <rect x="5" y="4" width="14" height="12" fill="#5b6c84" stroke="#fff" strokeWidth="1.600" />
          <path d="M7 20h10M12 16v4" stroke="#fff" strokeWidth="2" />
          <path d="M1.500 2h5v7h-5zM4 9v7h2" fill="#6b7f99" stroke="#fff" strokeWidth="1.500" />
        </svg>
        <svg width="20" height="22" viewBox="0 0 21 22" fill="none" aria-hidden="true">
          <path d="M1 7.500h3.500L10 2v18l-5.500-5.500H1z" fill="#fff" stroke="#505f74" />
          <path d="M13 8c1 2 1 4 0 6M15.500 6c2 3 2 7 0 10M18 4c3 4 3 10 0 14" stroke="#fff" strokeWidth="1.200" />
        </svg>
      </TrayIcons>
      <Clock>16:43<br />10.07.2025</Clock>
      <ShowDesktop aria-label="Показать рабочий стол" />
    </Tray>
  </Taskbar>
);

export default function App() {
  return (
    <>
      <GlobalStyle />
      <Desktop>
        <BrowserWindow>
          <SideRail />
          <MainColumn>
            <TopTabs />
            <Card>
              <AddressRow />
              <BookmarkRow />
              <ReportPage />
            </Card>
          </MainColumn>
        </BrowserWindow>
        <SystemBar />
      </Desktop>
    </>
  );
}
